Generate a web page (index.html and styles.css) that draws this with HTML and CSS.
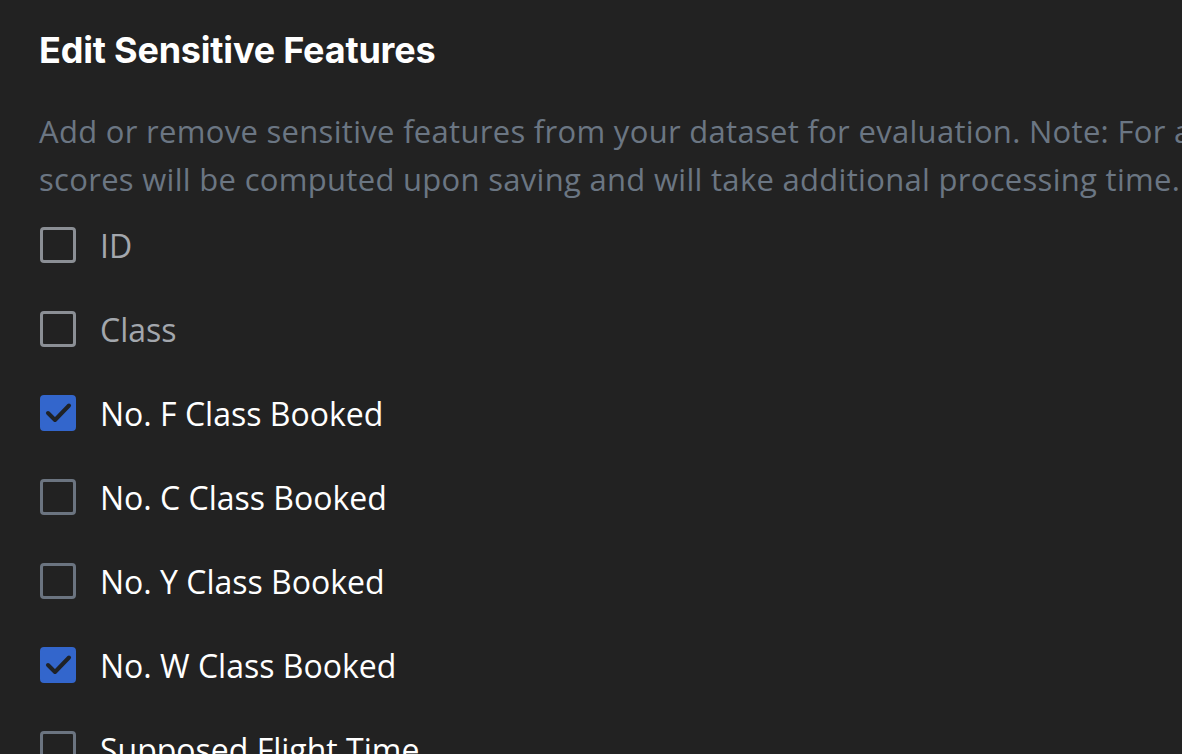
FILE: index.html
```html
<!DOCTYPE html>
<html>
<head>
<meta charset="utf-8">
<link rel="stylesheet" href="styles.css">
</head>
<body>
<main class="panel">
  <h1 class="title">Edit Sensitive Features</h1>
  <p class="desc">Add or remove sensitive features from your dataset for evaluation. Note: For any newly added features,<br>scores will be computed upon saving and will take additional processing time.</p>
  <ul class="list">
    <li class="item disabled"><span class="box"></span><span class="label">ID</span></li>
    <li class="item disabled"><span class="box"></span><span class="label">Class</span></li>
    <li class="item"><span class="box checked"><svg viewBox="0 0 36 36" width="36" height="36"><path d="M8 18 L15 25 L29 10.5" fill="none" stroke="#1f2227" stroke-width="4" stroke-linecap="round" stroke-linejoin="round"/></svg></span><span class="label">No. F Class Booked</span></li>
    <li class="item"><span class="box"></span><span class="label">No. C Class Booked</span></li>
    <li class="item"><span class="box"></span><span class="label">No. Y Class Booked</span></li>
    <li class="item"><span class="box checked"><svg viewBox="0 0 36 36" width="36" height="36"><path d="M8 18 L15 25 L29 10.5" fill="none" stroke="#1f2227" stroke-width="4" stroke-linecap="round" stroke-linejoin="round"/></svg></span><span class="label">No. W Class Booked</span></li>
    <li class="item"><span class="box"></span><span class="label">Supposed Flight Time</span></li>
  </ul>
</main>
</body>
</html>
```
FILE: styles.css
```css
html, body {
  margin: 0;
  padding: 0;
  background: #222222;
  overflow: hidden;
}
.panel {
  width: 1600px;
  padding: 26px 0 0 39px;
  box-sizing: border-box;
}
.title {
  margin: 0;
  font-family: Inter, "Liberation Sans", sans-serif;
  font-weight: 700;
  font-size: 36px;
  line-height: 48px;
  color: #ffffff;
  letter-spacing: -0.2px;
}
.desc {
  margin: 33px 0 0 0;
  font-family: "Open Sans", "Liberation Sans", sans-serif;
  font-size: 31px;
  line-height: 48px;
  letter-spacing: 0.3px;
  color: #6b7683;
  white-space: nowrap;
}
.list {
  list-style: none;
  margin: 18px 0 0 0;
  padding: 0;
  display: flex;
  flex-direction: column;
  gap: 36px;
}
.item {
  display: flex;
  align-items: center;
  gap: 24px;
  height: 48px;
}
.box {
  width: 36px;
  height: 36px;
  box-sizing: border-box;
  border: 3px solid #6b7480;
  border-radius: 4px;
  flex: none;
  display: flex;
  margin-left: 1px;
}
.box.checked {
  background: #3366cc;
  border-color: #3366cc;
}
.box.checked svg {
  margin: -3px;
}
.disabled .box {
  border-color: #8b8f95;
}
.label {
  font-family: "Open Sans", "Liberation Sans", sans-serif;
  font-size: 32px;
  color: #ffffff;
}
.disabled .label {
  color: #a3a7ad;
}
```
